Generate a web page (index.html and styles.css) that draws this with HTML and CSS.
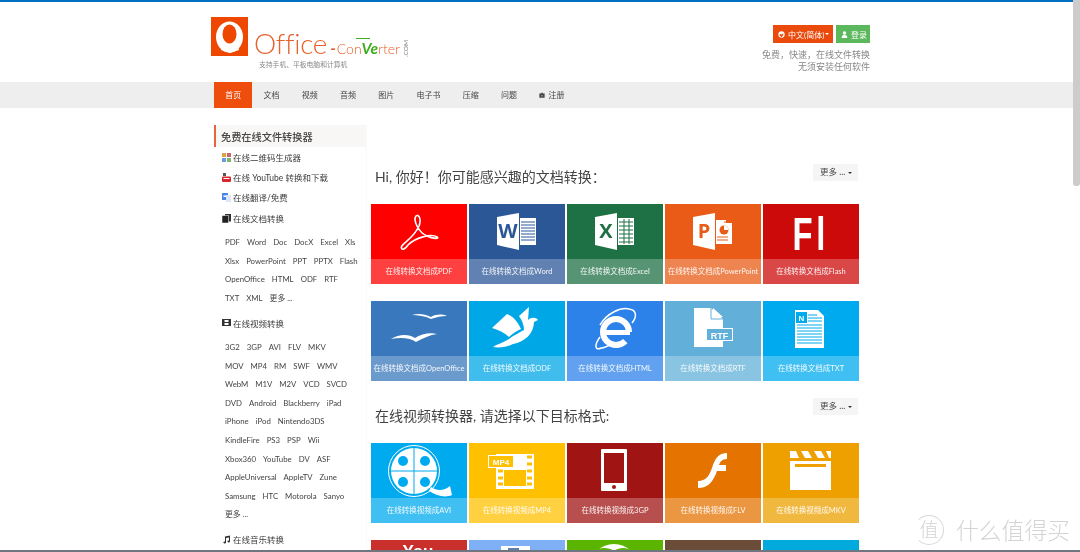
FILE: index.html
```html
<!DOCTYPE html>
<html lang="zh-CN">
<head>
<meta charset="utf-8">
<title>Office-Converter</title>
<link rel="stylesheet" href="styles.css">
</head>
<body>
<div class="topbar"></div>
<header class="site-header">
  <div class="wrap header-inner">
    <div class="logo">
      <svg class="logo-mark" viewBox="0 0 37 39"><rect width="37" height="39" fill="#ee4700"/><ellipse cx="18.500" cy="20" rx="13.500" ry="15.500" fill="#fff"/><ellipse cx="18.500" cy="17" rx="7" ry="9.500" fill="#ee4700"/><path d="M11 26c3 3 5 3 6 1 2 3 6 2 9-2l2 8-9 3-9-3z" fill="#fff"/></svg>
      <div class="logo-text">
        <div class="logo-name"><span class="logo-office">Office</span><span class="logo-dash">-</span><span class="logo-con">Con</span><span class="logo-ver">Ve</span><span class="logo-con">rter</span><span class="logo-com">.COM</span></div>
        <div class="logo-tagline">支持手机、平板电脑和计算机</div>
      </div>
    </div>
    <div class="header-right">
      <div class="header-buttons">
        <a class="hbtn hbtn--lang"><svg class="hbtn-icon" viewBox="0 0 8 8"><circle cx="4" cy="4" r="3.600" fill="#fff"/><path d="M2 3l2 1 2-1.500v2L4 7 2 5z" fill="#ee4700"/></svg>中文(简体)<span class="caret caret--white"></span></a>
        <a class="hbtn hbtn--login"><svg class="hbtn-icon" viewBox="0 0 8 8"><circle cx="4" cy="2.300" r="2" fill="#fff"/><path d="M.8 8c0-3 1.500-3.700 3.200-3.700S7.200 5 7.200 8z" fill="#fff"/></svg>登录</a>
      </div>
      <p class="header-slogan">免费，快速，在线文件转换<br>无须安装任何软件</p>
    </div>
  </div>
</header>
<nav class="nav">
  <div class="wrap nav-inner">
    <a class="nav-item nav-item--active">首页</a>
    <a class="nav-item">文档</a>
    <a class="nav-item">视频</a>
    <a class="nav-item">音频</a>
    <a class="nav-item">图片</a>
    <a class="nav-item">电子书</a>
    <a class="nav-item">压缩</a>
    <a class="nav-item">问题</a>
    <a class="nav-item"><svg class="nav-icon" viewBox="0 0 8 8"><path d="M3 1h2v1h2.500v5.500h-7V2H3z" fill="#444"/><rect x="3.500" y="4" width="1" height="2" fill="#eee"/></svg>注册</a>
  </div>
</nav>
<div class="wrap content">
  <aside class="sidebar">
    <div class="side-title">免费在线文件转换器</div>
    <a class="side-link"><svg class="side-icon" viewBox="0 0 9 9"><rect width="4" height="4" fill="#d9a441"/><rect x="5" width="4" height="4" fill="#c66"/><rect y="5" width="4" height="4" fill="#6a9ad8"/><rect x="5" y="5" width="4" height="4" fill="#7fb46c"/></svg>在线二维码生成器</a>
    <a class="side-link"><svg class="side-icon" viewBox="0 0 9 9"><rect x="1" width="3" height="3" fill="#555"/><rect y="3.500" width="9" height="5.500" rx="1" fill="#d8262c"/><rect x="1.500" y="5" width="6" height="1" fill="#fff"/></svg>在线 YouTube 转换和下载</a>
    <a class="side-link"><svg class="side-icon" viewBox="0 0 9 9"><rect width="6" height="7" fill="#4a86e8"/><rect x="4" y="2" width="5" height="7" fill="#dde6f5"/><rect x="1.500" y="2.500" width="2.500" height="1.500" fill="#fff"/></svg>在线翻译/免费</a>
    <a class="side-link side-link--gap"><svg class="side-icon" viewBox="0 0 9 9"><rect x="3" width="6" height="7.500" fill="#333"/><rect y="1.500" width="6.500" height="7.500" fill="#222" stroke="#fff" stroke-width=".5"/></svg>在线文档转换</a>
    <div class="tags">
      <div class="tag-row"><a>PDF</a><a>Word</a><a>Doc</a><a>DocX</a><a>Excel</a><a>Xls</a></div>
      <div class="tag-row"><a>Xlsx</a><a>PowerPoint</a><a>PPT</a><a>PPTX</a><a>Flash</a></div>
      <div class="tag-row"><a>OpenOffice</a><a>HTML</a><a>ODF</a><a>RTF</a></div>
      <div class="tag-row"><a>TXT</a><a>XML</a><a>更多 ...</a></div>
    </div>
    <a class="side-link"><svg class="side-icon" viewBox="0 0 9 9"><path d="M0 1h9v7H0z" fill="#333"/><path d="M2.500 2h4v2h-4zM2.500 5h4v2h-4z" fill="#fff"/></svg>在线视频转换</a>
    <div class="tags">
      <div class="tag-row"><a>3G2</a><a>3GP</a><a>AVI</a><a>FLV</a><a>MKV</a></div>
      <div class="tag-row"><a>MOV</a><a>MP4</a><a>RM</a><a>SWF</a><a>WMV</a></div>
      <div class="tag-row"><a>WebM</a><a>M1V</a><a>M2V</a><a>VCD</a><a>SVCD</a></div>
      <div class="tag-row"><a>DVD</a><a>Android</a><a>Blackberry</a><a>iPad</a></div>
      <div class="tag-row"><a>iPhone</a><a>iPod</a><a>Nintendo3DS</a></div>
      <div class="tag-row"><a>KindleFire</a><a>PS3</a><a>PSP</a><a>Wii</a></div>
      <div class="tag-row"><a>Xbox360</a><a>YouTube</a><a>DV</a><a>ASF</a></div>
      <div class="tag-row"><a>AppleUniversal</a><a>AppleTV</a><a>Zune</a></div>
      <div class="tag-row"><a>Samsung</a><a>HTC</a><a>Motorola</a><a>Sanyo</a></div>
      <div class="tag-row"><a>更多 ...</a></div>
    </div>
    <a class="side-link"><svg class="side-icon" viewBox="0 0 9 9"><path d="M3 1.500 8 .5v6a1.300 1 0 1 1-1-1V2.500l-3 .6V7.500a1.300 1 0 1 1-1-1z" fill="#333"/></svg>在线音乐转换</a>
  </aside>
  <main class="main">
    <div class="section-head">
      <h2 class="section-title">Hi, 你好！你可能感兴趣的文档转换：</h2>
      <a class="more">更多 ...<span class="caret"></span></a>
    </div>
    <div class="tile-row">
      <a class="tile tile--pdf"><svg class="tile-icon" viewBox="0 0 96 55"><path d="M31 45C27 41 42 36 48 22 51 14 47 10 45 12 42 16 47 28 56 32 62 35 69 35 66 33 60 29 44 34 37 41 35 44 32 46 31 45Z" fill="none" stroke="#fff" stroke-width="1.600"/></svg><span class="tile-caption">在线转换文档成PDF</span></a>
      <a class="tile tile--word"><svg class="tile-icon" viewBox="0 0 96 55"><path d="M28 13 50 9V46L28 41Z" fill="#fff"/><path d="M51 14H67V41H51Z" fill="#fff"/><path d="M52 18h14M52 21h14M52 24h14M52 27h14M52 30h14M52 33h14M52 36h14" stroke="#2b5797"/><text x="39" y="34" class="svg-letter" fill="#2b5797">W</text></svg><span class="tile-caption">在线转换文档成Word</span></a>
      <a class="tile tile--excel"><svg class="tile-icon" viewBox="0 0 96 55"><path d="M28 13 50 9V46L28 41Z" fill="#fff"/><path d="M51 14H67V41H51Z" fill="#fff"/><path d="M52 18h14M52 22h14M52 26h14M52 30h14M52 34h14M52 38h14M57 15v25M62 15v25" stroke="#1e7145"/><text x="39" y="34" class="svg-letter" fill="#1e7145">X</text></svg><span class="tile-caption">在线转换文档成Excel</span></a>
      <a class="tile tile--ppt"><svg class="tile-icon" viewBox="0 0 96 55"><path d="M28 13 50 9V46L28 41Z" fill="#fff"/><path d="M51 16H61V19H67V40H51Z" fill="#fff"/><path d="M60 17v2" stroke="#e95b16"/><circle cx="59" cy="26" r="4.500" fill="#e95b16"/><path d="M59 21.500a4.500 4.500 0 0 1 4.500 4.500H59z" fill="#fff"/><path d="M52 33h11M52 36h11" stroke="#e95b16"/><text x="39" y="34" class="svg-letter" fill="#e95b16">P</text></svg><span class="tile-caption">在线转换文档成PowerPoint</span></a>
      <a class="tile tile--flash"><svg class="tile-icon" viewBox="0 0 96 55"><text transform="translate(29.600 46) scale(.7 1)" class="svg-fl" fill="#fff">Fl</text></svg><span class="tile-caption">在线转换文档成Flash</span></a>
    </div>
    <div class="tile-row">
      <a class="tile tile--oo"><svg class="tile-icon" viewBox="0 0 96 55"><path d="M41 14C47 12 54 13 60 16 65 13 71 13 76 15 70 15 66 16 60 18 54 15 47 14 41 14Z" fill="#fff"/><path d="M20 38C28 33 38 33 44 37 50 33 59 31 66 33 59 34 52 37 45 41 40 37 30 36 20 38Z" fill="#fff"/></svg><span class="tile-caption">在线转换文档成OpenOffice</span></a>
      <a class="tile tile--odf"><svg class="tile-icon" viewBox="0 0 96 55"><path d="M23 27 38 13C44 15 49 21 52 28 46 31 43 33 40 36 36 32 30 29 23 27Z" fill="#fff"/><path d="M50 15 60 6 59 19C62 16 67 16 69 19L65 21C65 32 56 41 44 43 38 46 30 47 24 46 28 43 34 42 40 38 45 34 50 32 55 29 55 24 53 19 50 15Z" fill="#fff"/></svg><span class="tile-caption">在线转换文档成ODF</span></a>
      <a class="tile tile--html"><svg class="tile-icon" viewBox="0 0 96 55"><path d="M33 24C40 12 54 6 62 8 70 9 70 16 65 22M33 36C27 44 28 50 34 47 37 47 39 46 43 44" fill="none" stroke="#fff" stroke-width="1.500"/><circle cx="49" cy="31" r="13" fill="none" stroke="#fff" stroke-width="6" stroke-dasharray="72 10" stroke-dashoffset="-10"/><rect x="37" y="29" width="26" height="5" fill="#fff"/></svg><span class="tile-caption">在线转换文档成HTML</span></a>
      <a class="tile tile--rtf"><svg class="tile-icon" viewBox="0 0 96 55"><path d="M29 7H46L58 18V27H41V40H58V46H29Z" fill="#fff"/><path d="M48 7 58 16H48Z" fill="#fff"/><path d="M46 7V18H58" fill="none" stroke="#62b0d9"/><rect x="41" y="27" width="27" height="13" fill="#fff"/><rect x="42" y="28" width="25" height="11" fill="#62b0d9"/><text x="54.500" y="37.500" class="svg-rtf" fill="#fff">RTF</text></svg><span class="tile-caption">在线转换文档成RTF</span></a>
      <a class="tile tile--txt"><svg class="tile-icon" viewBox="0 0 96 55"><path d="M32 9H55L61 15V47H32Z" fill="#fff"/><rect x="33" y="11" width="11" height="11" fill="#00aaee"/><text x="38.500" y="20" class="svg-n" fill="#fff">N</text><path d="M45 14h9M45 17h14M45 20h14M34 24h25M34 27h25M34 30h25M34 33h25M34 36h25M34 39h25M34 42h25" stroke="#00aaee"/></svg><span class="tile-caption">在线转换文档成TXT</span></a>
    </div>
    <div class="section-head section-head--video">
      <h2 class="section-title section-title--video">在线视频转换器, 请选择以下目标格式:</h2>
      <a class="more">更多 ...<span class="caret"></span></a>
    </div>
    <div class="tile-row">
      <a class="tile tile--avi"><svg class="tile-icon" viewBox="0 0 96 55"><circle cx="43" cy="28" r="25.500" fill="none" stroke="#fff"/><circle cx="43" cy="28" r="23" fill="#fff"/><path d="M43 5v46M20 28h46" stroke="#00aaee"/><circle cx="32" cy="18" r="5" fill="#00aaee"/><circle cx="54" cy="18" r="5" fill="#00aaee"/><circle cx="32" cy="39" r="5" fill="#00aaee"/><circle cx="54" cy="39" r="5" fill="#00aaee"/><path d="M60 44C66 48 73 48 79 43L81 52C74 55 66 53 58 48Z" fill="#fff"/></svg><span class="tile-caption">在线转换视频成AVI</span></a>
      <a class="tile tile--mp4"><svg class="tile-icon" viewBox="0 0 96 55"><rect x="27" y="11" width="38" height="35" fill="#fff"/><rect x="35" y="27" width="22" height="16" fill="#ffc000"/><rect x="37" y="29" width="18" height="12" fill="#ffc000"/><path d="M58 14h5M58 21h5M58 28h5M58 35h5M58 41h5M29 28h5M29 35h5M29 41h5" stroke="#ffc000" stroke-width="3"/><rect x="19.500" y="12.500" width="25" height="12" fill="#ffc000" stroke="#fff"/><text x="32" y="22" class="svg-mp4" fill="#fff">MP4</text></svg><span class="tile-caption">在线转换视频成MP4</span></a>
      <a class="tile tile--3gp"><svg class="tile-icon" viewBox="0 0 96 55"><rect x="34" y="6" width="26" height="42" rx="1" fill="#fff"/><rect x="37" y="10" width="20" height="30" fill="#a01414"/><circle cx="47" cy="44" r="2" fill="#a01414"/></svg><span class="tile-caption">在线转换视频成3GP</span></a>
      <a class="tile tile--flv"><svg class="tile-icon" viewBox="0 0 96 55"><path d="M33 38C41 38 44 33 47 25 50 15 54 10 62 10V16C57 16 55 19 54 22H61V28H52C48 39 43 45 33 45Z" fill="#fff"/></svg><span class="tile-caption">在线转换视频成FLV</span></a>
      <a class="tile tile--mkv"><svg class="tile-icon" viewBox="0 0 96 55"><path d="M27 8h6l3 7h-9zM38 8h7l4 7h-7zM51 8h7l4 7h-7zM63 8h5v7h-2z" fill="#fff"/><path d="M27 18H68V47H27Z" fill="#fff"/><rect x="32" y="21" width="31" height="3" fill="#eda000"/></svg><span class="tile-caption">在线转换视频成MKV</span></a>
    </div>
    <div class="tile-row">
      <a class="tile tile--yt"><svg class="tile-icon" viewBox="0 0 96 55"><text x="47" y="17" class="svg-you" fill="#fff">You</text></svg></a>
      <a class="tile tile--doc"><svg class="tile-icon" viewBox="0 0 96 55"><rect x="32" y="6" width="29" height="40" fill="#fff"/><rect x="39" y="8" width="11" height="3" fill="#5f7fb0"/></svg></a>
      <a class="tile tile--xbox"><svg class="tile-icon" viewBox="0 0 96 55"><circle cx="47" cy="28" r="24" fill="#fff"/><path d="M47 11C40 6 30 8 28 12L47 24 66 12C62 8 54 6 47 11Z" fill="#5ab400"/></svg></a>
      <a class="tile tile--brown"></a>
      <a class="tile tile--cyan"></a>
    </div>
  </main>
</div>
<div class="scroll-thumb"></div>
<div class="watermark"><span class="watermark-mark">值</span><span>什么值得买</span></div>
<div class="bottom-line"></div>
</body>
</html>
```
FILE: styles.css
```css
* { box-sizing: border-box; }
html, body { margin: 0; height: 552px; overflow: hidden; background: #fff; }
body { font-family: "Lato", "Noto Sans CJK SC", sans-serif; color: #444; position: relative; filter: blur(.35px); }
a { text-decoration: none; color: inherit; }
.topbar { height: 2px; background: #0070c0; }
.wrap { width: 660px; margin: 0 auto; }

.site-header { height: 80px; }
.header-inner { display: flex; justify-content: space-between; height: 100%; padding-left: 1px; }
.logo { display: flex; padding-top: 15px; }
.logo-mark { width: 37px; height: 39px; flex: none; }
.logo-text { margin-left: 6px; }
.logo-name { display: flex; align-items: baseline; height: 42px; padding-top: 11px; color: #e8602c; line-height: 30px; }
.logo-office { font-family: "Lato", sans-serif; font-weight: 300; font-size: 28px; letter-spacing: -.3px; }
.logo-dash { font-size: 15px; font-weight: 700; margin: 0 1px 0 3px; }
.logo-con { font-family: "Lato", sans-serif; font-weight: 300; font-size: 14px; }
.logo-ver { font-family: "Lato", sans-serif; font-size: 15.500px; font-weight: 700; font-style: italic; color: #3fae1e; position: relative; }
.logo-ver::before { content: ""; position: absolute; left: -6px; right: 8px; top: 5px; height: 1px; background: #3fae1e; }
.logo-com { writing-mode: vertical-rl; transform: rotate(180deg); font-size: 6.500px; color: #888; align-self: flex-end; margin-left: 2px; line-height: 8px; margin-bottom: 2px; }
.logo-tagline { font-size: 6.800px; line-height: 10px; color: #888; margin-left: 5px; }

.header-right { padding-top: 23px; text-align: right; }
.header-buttons { display: flex; justify-content: flex-end; gap: 3px; }
.hbtn { display: flex; align-items: center; height: 18px; padding: 0 0 0 5px; font-size: 8px; color: #fff; white-space: nowrap; }
.hbtn--lang { background: #ea4a0c; width: 60px; }
.hbtn--login { background: #5cb85c; width: 34px; }
.hbtn-icon { width: 7px; height: 7px; margin-right: 3px; flex: none; }
.caret { display: inline-block; width: 0; height: 0; margin-left: 3px; border: 2px solid transparent; border-top-color: #333; border-bottom: 0; vertical-align: middle; }
.caret--white { border-top-color: #fff; margin-left: 1px; }
.header-slogan { margin: 6px 0 0; font-size: 9px; line-height: 11.500px; color: #888; }

.nav { height: 26px; background: #eee; }
.nav-inner { display: flex; padding-left: 4px; height: 100%; }
.nav-item { display: flex; align-items: center; padding: 0 11.150px 1px; font-size: 8px; color: #444; }
.nav-item--active { background: #ee4d0b; color: #fff; }
.nav-icon { width: 6px; height: 6px; margin-right: 3px; }

.content { display: flex; padding-left: 4px; height: 444px; overflow: hidden; }
.sidebar { width: 153px; margin-top: 17px; flex: none; border-right: 1px solid #fafafa; }
.side-title { height: 22px; line-height: 24px; padding-left: 5px; background: #f9f7f6; border-left: 2px solid #e8643c; font-size: 10.200px; font-weight: 500; color: #444; }
.side-link { display: flex; align-items: center; height: 20px; padding-left: 8px; font-size: 8.500px; color: #3c3c3c; }
.side-link--gap { margin-top: 1px; }
.side-icon { width: 9px; height: 9px; margin-right: 2px; flex: none; }
.tags { margin: 5.200px 0; padding-left: 11px; }
.tag-row { display: flex; gap: 7px; height: 18.600px; line-height: 18.600px; font-size: 7.800px; color: #444; white-space: nowrap; }

.main { width: 487px; margin-left: 4px; padding-top: 56px; flex: none; }
.section-head { display: flex; justify-content: space-between; align-items: flex-start; height: 40px; }
.section-head--video { height: 45px; }
.section-title { margin: 0 0 0 4px; font-size: 14px; line-height: 26px; font-weight: 400; color: #444; }
.section-title--video { margin-top: 5px; }
.more { display: block; width: 45px; height: 17px; line-height: 17px; background: #f5f5f5; padding-left: 7px; font-size: 8.500px; color: #444; white-space: nowrap; }
.tile-row { display: flex; gap: 2px; margin-bottom: 17px; }
.tile { position: relative; display: flex; flex-direction: column; width: 96px; height: 80px; flex: none; color: #fff; }
.tile-icon { display: block; width: 96px; height: 55px; flex: none; }
.tile-caption { height: 25px; line-height: 26px; text-align: center; font-size: 7.500px; color: rgba(255,255,255,.92); background: rgba(255,255,255,.25); white-space: nowrap; }
.tile--pdf { background: #f00; }
.tile--word { background: #2b5797; }
.tile--excel { background: #1e7145; }
.tile--ppt { background: #e95b16; }
.tile--flash { background: #cc0a0a; }
.tile--oo { background: #3a78bd; }
.tile--odf { background: #00a7e7; }
.tile--html { background: #2d82ea; }
.tile--rtf { background: #62b0d9; }
.tile--txt { background: #0ae; }
.tile--avi { background: #0ae; }
.tile--mp4 { background: #ffc000; }
.tile--3gp { background: #a01414; }
.tile--flv { background: #e57300; }
.tile--mkv { background: #eda000; }
.tile--yt { background: #c9302c; }
.tile--doc { background: #7fb0f5; }
.tile--xbox { background: #5ab400; }
.tile--brown { background: #6b4c38; }
.tile--cyan { background: #00aadc; }

.svg-letter { font-family: "Open Sans", sans-serif; font-weight: 700; font-size: 20px; text-anchor: middle; }
.svg-fl { font-family: "Liberation Sans", sans-serif; font-weight: 700; font-size: 47px; letter-spacing: 5px; }
.svg-rtf { font-family: "Liberation Sans", sans-serif; font-weight: 700; font-size: 9px; text-anchor: middle; }
.svg-n { font-family: "Liberation Sans", sans-serif; font-weight: 700; font-size: 8px; text-anchor: middle; }
.svg-mp4 { font-family: "Liberation Sans", sans-serif; font-weight: 700; font-size: 8px; text-anchor: middle; }
.svg-you { font-family: "Liberation Sans", sans-serif; font-weight: 700; font-size: 17px; text-anchor: middle; }

.scroll-thumb { position: absolute; right: 0; top: 0; width: 7px; height: 186px; background: #ccc; border-radius: 0 0 3px 3px; }
.watermark { position: absolute; right: 10px; bottom: 7px; display: flex; align-items: center; gap: 12px; font-size: 22.800px; line-height: 30px; color: #d4d4d4; font-weight: 300; }
.watermark-mark { display: flex; align-items: center; justify-content: center; width: 30px; height: 30px; border: 1px solid #d8d8d8; border-left-color: transparent; border-radius: 50%; font-size: 19px; }
.bottom-line { position: absolute; left: 0; right: 0; bottom: 0; height: 2px; background: #6f7680; }
```
